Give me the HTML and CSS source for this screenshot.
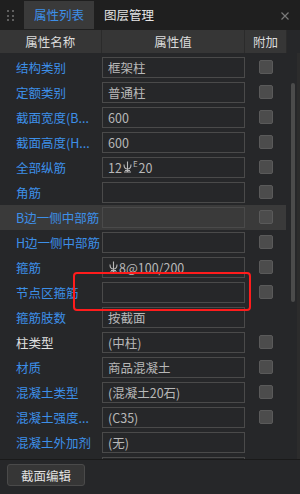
FILE: index.html
```html
<!DOCTYPE html>
<html lang="zh">
<head>
  <meta charset="UTF-8">
  <meta name="viewport" content="width=device-width, initial-scale=1.0">
  <title>属性列表</title>
  <link rel="stylesheet" href="styles.css">
</head>
<body>

<div class="panel">
  <div class="tabbar">
    <div class="grip"><i></i><i></i><i></i><i></i><i></i><i></i></div>
    <div class="tab active">属性列表</div>
    <div class="tab">图层管理</div>
    <svg class="close" width="8" height="8" viewBox="0 0 8 8"><path d="M0.5 0.5L7.5 7.5M7.5 0.5L0.5 7.5" stroke="#7a7a7a" stroke-width="1.2"/></svg>
  </div>

  <div class="table-head">
    <div class="col-name">属性名称</div>
    <div class="col-value">属性值</div>
    <div class="col-add">附加</div>
  </div>

  <div class="rows">
    <div class="row"><div class="name">结构类别</div><div class="value"><span class="box">框架柱</span></div><div class="add"><span class="check"></span></div></div>
    <div class="row"><div class="name">定额类别</div><div class="value"><span class="box">普通柱</span></div><div class="add"><span class="check"></span></div></div>
    <div class="row"><div class="name">截面宽度(B...</div><div class="value"><span class="box">600</span></div><div class="add"><span class="check"></span></div></div>
    <div class="row"><div class="name">截面高度(H...</div><div class="value"><span class="box">600</span></div><div class="add"><span class="check"></span></div></div>
    <div class="row"><div class="name">全部纵筋</div><div class="value"><span class="box">12<svg class="rebar" width="9" height="12" viewBox="0 0 9 12"><path d="M4.5 0.5V11.5M1 3.5Q1 8 4.5 8Q8 8 8 3.5M1 11H8M2 9.5H7" stroke="#b8b8b8" stroke-width="1.1" fill="none"/></svg><span class="sup">E</span>20</span></div><div class="add"><span class="check"></span></div></div>
    <div class="row"><div class="name">角筋</div><div class="value"><span class="box"></span></div><div class="add"><span class="check"></span></div></div>
    <div class="row selected"><div class="name">B边一侧中部筋</div><div class="value"><span class="box"></span></div><div class="add"><span class="check"></span></div></div>
    <div class="row"><div class="name">H边一侧中部筋</div><div class="value"><span class="box"></span></div><div class="add"><span class="check"></span></div></div>
    <div class="row"><div class="name">箍筋</div><div class="value"><span class="box"><svg class="rebar" width="9" height="12" viewBox="0 0 9 12"><path d="M4.5 0.5V11.5M1 3.5Q1 8 4.5 8Q8 8 8 3.5M1 11H8M2 9.5H7" stroke="#b8b8b8" stroke-width="1.1" fill="none"/></svg>8@100/200</span></div><div class="add"><span class="check"></span></div></div>
    <div class="row"><div class="name">节点区箍筋</div><div class="value"><span class="box"></span></div><div class="add"><span class="check"></span></div></div>
    <div class="row"><div class="name">箍筋肢数</div><div class="value"><span class="box">按截面</span></div><div class="add"></div></div>
    <div class="row"><div class="name plain">柱类型</div><div class="value"><span class="box">(中柱)</span></div><div class="add"><span class="check"></span></div></div>
    <div class="row"><div class="name">材质</div><div class="value"><span class="box">商品混凝土</span></div><div class="add"><span class="check"></span></div></div>
    <div class="row"><div class="name">混凝土类型</div><div class="value"><span class="box">(混凝土20石)</span></div><div class="add"><span class="check"></span></div></div>
    <div class="row"><div class="name">混凝土强度...</div><div class="value"><span class="box">(C35)</span></div><div class="add"><span class="check"></span></div></div>
    <div class="row"><div class="name">混凝土外加剂</div><div class="value"><span class="box">(无)</span></div><div class="add"></div></div>
    <div class="row"><div class="name plain">泵送类型</div><div class="value"><span class="box">(混凝土泵)</span></div><div class="add"><span class="check"></span></div></div>

    <div class="mark"></div>
    <div class="scrollbar"></div>
  </div>

  <div class="footer">
    <button class="btn">截面编辑</button>
  </div>
</div>

</body>
</html>
```

FILE: styles.css
```css
body {
  margin: 0;
  background-color: #1f1f1f;
  font-family: "Noto Sans CJK SC", "Microsoft YaHei", sans-serif;
  font-size: 12px;
}
.panel {
  width: 300px;
  height: 494px;
  display: flex;
  flex-direction: column;
  background-color: #262729;
  overflow: hidden;
}
.tabbar {
  height: 30px;
  flex: none;
  display: flex;
  align-items: stretch;
  background-color: #1f1f1f;
}
.grip {
  width: 7px;
  margin: 10px 10px 0 7px;
  display: grid;
  grid-template-columns: 2px 2px;
  grid-auto-rows: 2px;
  column-gap: 3px;
  row-gap: 2.5px;
}
.grip i {
  background-color: #5f5f5f;
}
.tab {
  padding: 0 10px;
  line-height: 28px;
  margin-top: 1px;
  height: 28px;
  color: #e6e6e6;
  font-size: 12.5px;
}
.tab.active {
  color: #3d8fe8;
  background-color: #3a3a3a;
}
.close {
  margin: 12px 11px 0 auto;
}
.table-head {
  height: 23px;
  flex: none;
  display: flex;
  width: 287px;
  background-color: #363636;
  color: #dcdcdc;
  line-height: 23px;
  font-size: 12.5px;
}
.table-head div {
  text-align: center;
  border-right: 1px solid #2b2b2b;
}
.col-name { width: 101px; }
.col-value { width: 143px; }
.col-add { width: 41px; }
.rows {
  position: relative;
  flex: 1;
  padding-top: 2px;
  overflow: hidden;
  border-right: 3px solid #2c2c2c;
}
.row {
  display: flex;
  height: 25px;
  width: 286px;
}
.row.selected {
  background-color: #3a3a3a;
}
.name {
  width: 86px;
  padding-left: 16px;
  line-height: 25px;
  color: #3d8fe8;
  font-size: 12.5px;
  white-space: nowrap;
}
.name.plain {
  color: #e0e0e0;
}
.value {
  width: 143px;
  padding-top: 2px;
}
.box {
  display: flex;
  align-items: center;
  height: 19px;
  border: 1px solid #4a4a4a;
  padding-left: 5px;
  color: #b8b8b8;
  font-size: 12.5px;
  white-space: nowrap;
  overflow: hidden;
}
.box .sup {
  font-size: 8px;
  line-height: 8px;
  align-self: flex-start;
  margin: 2px 1px 0 0;
}
.rebar {
  margin: 0 1px 1px 1px;
}
.add {
  flex: 1;
  display: flex;
  justify-content: center;
  padding-top: 5px;
}
.check {
  width: 12px;
  height: 12px;
  border: 1px solid #5a5a5a;
  border-radius: 2px;
  background-color: #4c4c4c;
}
.mark {
  position: absolute;
  left: 73px;
  top: 219px;
  width: 174px;
  height: 35px;
  border: 2.5px solid #ff1c1c;
  border-radius: 4px;
}
.scrollbar {
  position: absolute;
  left: 291px;
  top: 30px;
  width: 4px;
  height: 219px;
  border-radius: 2px;
  background-color: #4b4b4b;
}
.footer {
  height: 30px;
  flex: none;
  border-top: 1px solid #1a1a1a;
  background-color: #262729;
  padding: 4px 0 0 7px;
}
.btn {
  width: 78px;
  height: 22px;
  padding: 0;
  background-color: #363636;
  border: 1px solid #4a4a4a;
  border-radius: 3px;
  color: #e0e0e0;
  font-family: "Noto Sans CJK SC", sans-serif;
  font-size: 12.5px;
}
```
